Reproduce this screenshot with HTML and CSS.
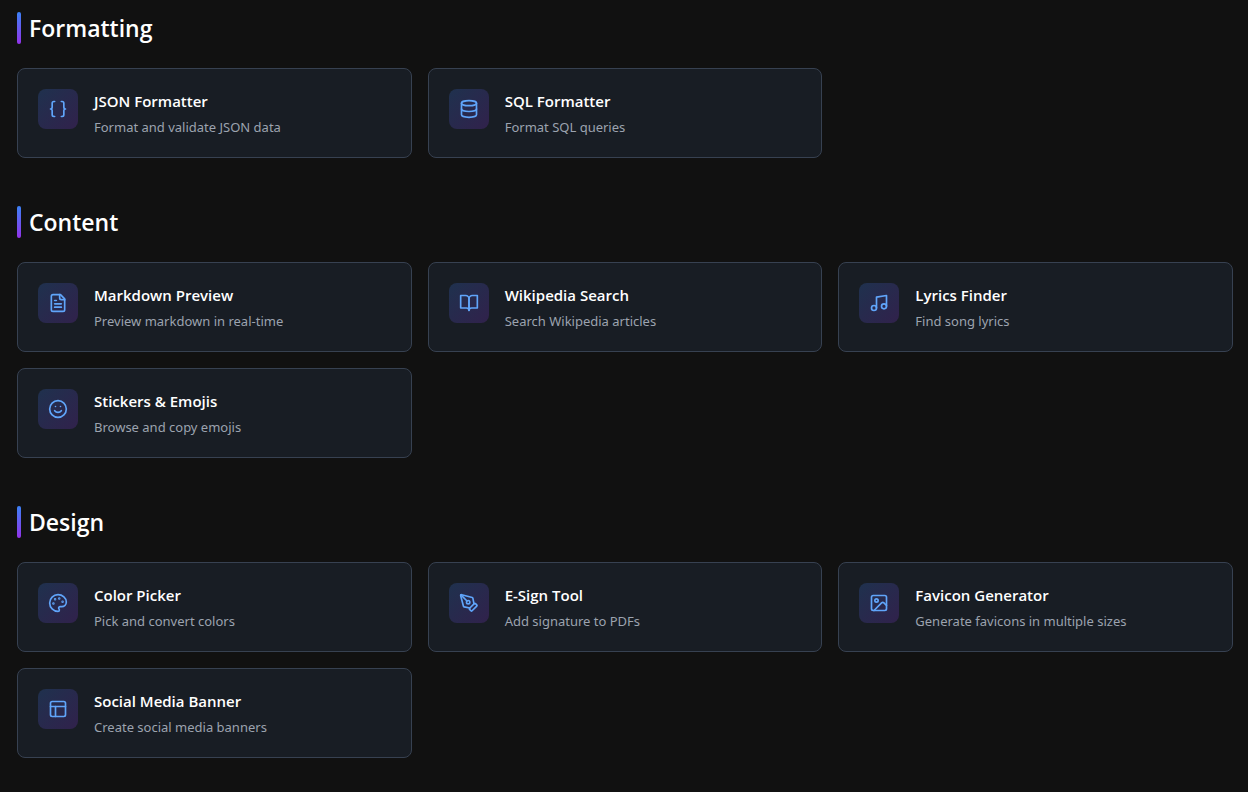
FILE: index.html
```html
<!DOCTYPE html>
<html lang="en">
<head>
  <meta charset="UTF-8" />
  <meta name="viewport" content="width=device-width, initial-scale=1.0" />
  <title>Tools</title>
  <link rel="stylesheet" href="styles.css">
</head>
<body>
  <main class="tools">
    <section class="category">
      <h2 class="category-title">Formatting</h2>
      <div class="grid">
        <a class="card" href="#json-formatter">
          <span class="icon">
            <svg viewBox="0 0 24 24"><path d="M8 3H7a2 2 0 0 0-2 2v5a2 2 0 0 1-2 2 2 2 0 0 1 2 2v5c0 1.1.9 2 2 2h1"/><path d="M16 21h1a2 2 0 0 0 2-2v-5c0-1.1.9-2 2-2a2 2 0 0 1-2-2V5a2 2 0 0 0-2-2h-1"/></svg>
          </span>
          <div class="info">
            <h3>JSON Formatter</h3>
            <p>Format and validate JSON data</p>
          </div>
        </a>
        <a class="card" href="#sql-formatter">
          <span class="icon">
            <svg viewBox="0 0 24 24"><ellipse cx="12" cy="5" rx="9" ry="3"/><path d="M3 5v14a9 3 0 0 0 18 0V5"/><path d="M3 12a9 3 0 0 0 18 0"/></svg>
          </span>
          <div class="info">
            <h3>SQL Formatter</h3>
            <p>Format SQL queries</p>
          </div>
        </a>
      </div>
    </section>

    <section class="category">
      <h2 class="category-title">Content</h2>
      <div class="grid">
        <a class="card" href="#markdown-preview">
          <span class="icon">
            <svg viewBox="0 0 24 24"><path d="M15 2H6a2 2 0 0 0-2 2v16a2 2 0 0 0 2 2h12a2 2 0 0 0 2-2V7Z"/><path d="M14 2v4a2 2 0 0 0 2 2h4"/><path d="M10 9H8"/><path d="M16 13H8"/><path d="M16 17H8"/></svg>
          </span>
          <div class="info">
            <h3>Markdown Preview</h3>
            <p>Preview markdown in real-time</p>
          </div>
        </a>
        <a class="card" href="#wikipedia-search">
          <span class="icon">
            <svg viewBox="0 0 24 24"><path d="M2 3h6a4 4 0 0 1 4 4v14a3 3 0 0 0-3-3H2z"/><path d="M22 3h-6a4 4 0 0 0-4 4v14a3 3 0 0 1 3-3h7z"/></svg>
          </span>
          <div class="info">
            <h3>Wikipedia Search</h3>
            <p>Search Wikipedia articles</p>
          </div>
        </a>
        <a class="card" href="#lyrics-finder">
          <span class="icon">
            <svg viewBox="0 0 24 24"><path d="M9 18V5l12-2v13"/><circle cx="6" cy="18" r="3"/><circle cx="18" cy="16" r="3"/></svg>
          </span>
          <div class="info">
            <h3>Lyrics Finder</h3>
            <p>Find song lyrics</p>
          </div>
        </a>
        <a class="card" href="#stickers-emojis">
          <span class="icon">
            <svg viewBox="0 0 24 24"><circle cx="12" cy="12" r="10"/><path d="M8 14s1.5 2 4 2 4-2 4-2"/><path d="M9 9h.01"/><path d="M15 9h.01"/></svg>
          </span>
          <div class="info">
            <h3>Stickers &amp; Emojis</h3>
            <p>Browse and copy emojis</p>
          </div>
        </a>
      </div>
    </section>

    <section class="category">
      <h2 class="category-title">Design</h2>
      <div class="grid">
        <a class="card" href="#color-picker">
          <span class="icon">
            <svg viewBox="0 0 24 24"><circle class="dot" cx="13.5" cy="6.5" r=".5"/><circle class="dot" cx="17.5" cy="10.5" r=".5"/><circle class="dot" cx="8.5" cy="7.5" r=".5"/><circle class="dot" cx="6.5" cy="12.5" r=".5"/><path d="M12 2C6.5 2 2 6.5 2 12s4.500 10 10 10c.926 0 1.648-.746 1.648-1.688 0-.437-.18-.835-.437-1.125-.29-.289-.438-.652-.438-1.125a1.640 1.640 0 0 1 1.668-1.668h1.996c3.051 0 5.555-2.503 5.555-5.554C21.965 6.012 17.461 2 12 2z"/></svg>
          </span>
          <div class="info">
            <h3>Color Picker</h3>
            <p>Pick and convert colors</p>
          </div>
        </a>
        <a class="card" href="#e-sign">
          <span class="icon">
            <svg viewBox="0 0 24 24"><path d="M15.707 21.293a1 1 0 0 1-1.414 0l-1.586-1.586a1 1 0 0 1 0-1.414l5.586-5.586a1 1 0 0 1 1.414 0l1.586 1.586a1 1 0 0 1 0 1.414z"/><path d="m18 13-1.375-6.874a1 1 0 0 0-.746-.776L3.235 2.028a1 1 0 0 0-1.207 1.207L5.350 15.879a1 1 0 0 0 .776.746L13 18"/><path d="m2.300 2.300 7.286 7.286"/><circle cx="11" cy="11" r="2"/></svg>
          </span>
          <div class="info">
            <h3>E-Sign Tool</h3>
            <p>Add signature to PDFs</p>
          </div>
        </a>
        <a class="card" href="#favicon-generator">
          <span class="icon">
            <svg viewBox="0 0 24 24"><rect x="3" y="3" width="18" height="18" rx="2"/><circle cx="9" cy="9" r="2"/><path d="m21 15-3.086-3.086a2 2 0 0 0-2.828 0L6 21"/></svg>
          </span>
          <div class="info">
            <h3>Favicon Generator</h3>
            <p>Generate favicons in multiple sizes</p>
          </div>
        </a>
        <a class="card" href="#social-media-banner">
          <span class="icon">
            <svg viewBox="0 0 24 24"><rect x="3" y="3" width="18" height="18" rx="2"/><path d="M3 9h18"/><path d="M9 21V9"/></svg>
          </span>
          <div class="info">
            <h3>Social Media Banner</h3>
            <p>Create social media banners</p>
          </div>
        </a>
      </div>
    </section>
  </main>
</body>
</html>
```
FILE: styles.css
```css
:root {
  --bg-color: #111111;
  --card-color: #181d24;
  --border-color: #374151;
  --accent: #60a5fa;
  --text-color: #ffffff;
  --muted: #9ca3af;
}

* {
  margin: 0;
  padding: 0;
  box-sizing: border-box;
}

body {
  background-color: var(--bg-color);
  color: var(--text-color);
  font-family: 'Segoe UI', 'Open Sans', sans-serif;
}

.tools {
  display: flex;
  flex-direction: column;
  gap: 48px;
  padding: 12px 15px 32px 17px;
}

.category-title {
  display: flex;
  align-items: center;
  gap: 8px;
  margin-bottom: 24px;
  font-size: 23px;
  line-height: 32px;
  font-weight: 600;
}

.category-title::before {
  content: '';
  width: 4px;
  height: 32px;
  border-radius: 2px;
  background: linear-gradient(to bottom, #3b82f6, #9333ea);
}

.grid {
  display: grid;
  grid-template-columns: repeat(3, 1fr);
  gap: 16px;
}

.card {
  display: flex;
  align-items: flex-start;
  gap: 16px;
  padding: 20px;
  background: var(--card-color);
  border: 1px solid var(--border-color);
  border-radius: 8px;
  color: inherit;
  text-decoration: none;
}

.card:hover {
  border-color: var(--accent);
}

.icon {
  flex-shrink: 0;
  padding: 10px;
  border-radius: 8px;
  background: linear-gradient(to bottom right, rgba(59, 130, 246, 0.2), rgba(147, 51, 234, 0.2));
  color: var(--accent);
}

.icon svg {
  display: block;
  width: 20px;
  height: 20px;
  fill: none;
  stroke: currentColor;
  stroke-width: 2;
  stroke-linecap: round;
  stroke-linejoin: round;
}

.icon .dot {
  fill: currentColor;
}

.info h3 {
  margin-bottom: 4px;
  font-size: 15px;
  line-height: 24px;
  font-weight: 600;
}

.info p {
  font-family: 'Segoe UI', 'Noto Sans', sans-serif;
  font-size: 13px;
  line-height: 20px;
  color: var(--muted);
}

@media (max-width: 900px) {
  .grid {
    grid-template-columns: repeat(2, 1fr);
  }
}

@media (max-width: 600px) {
  .grid {
    grid-template-columns: 1fr;
  }
}
```
